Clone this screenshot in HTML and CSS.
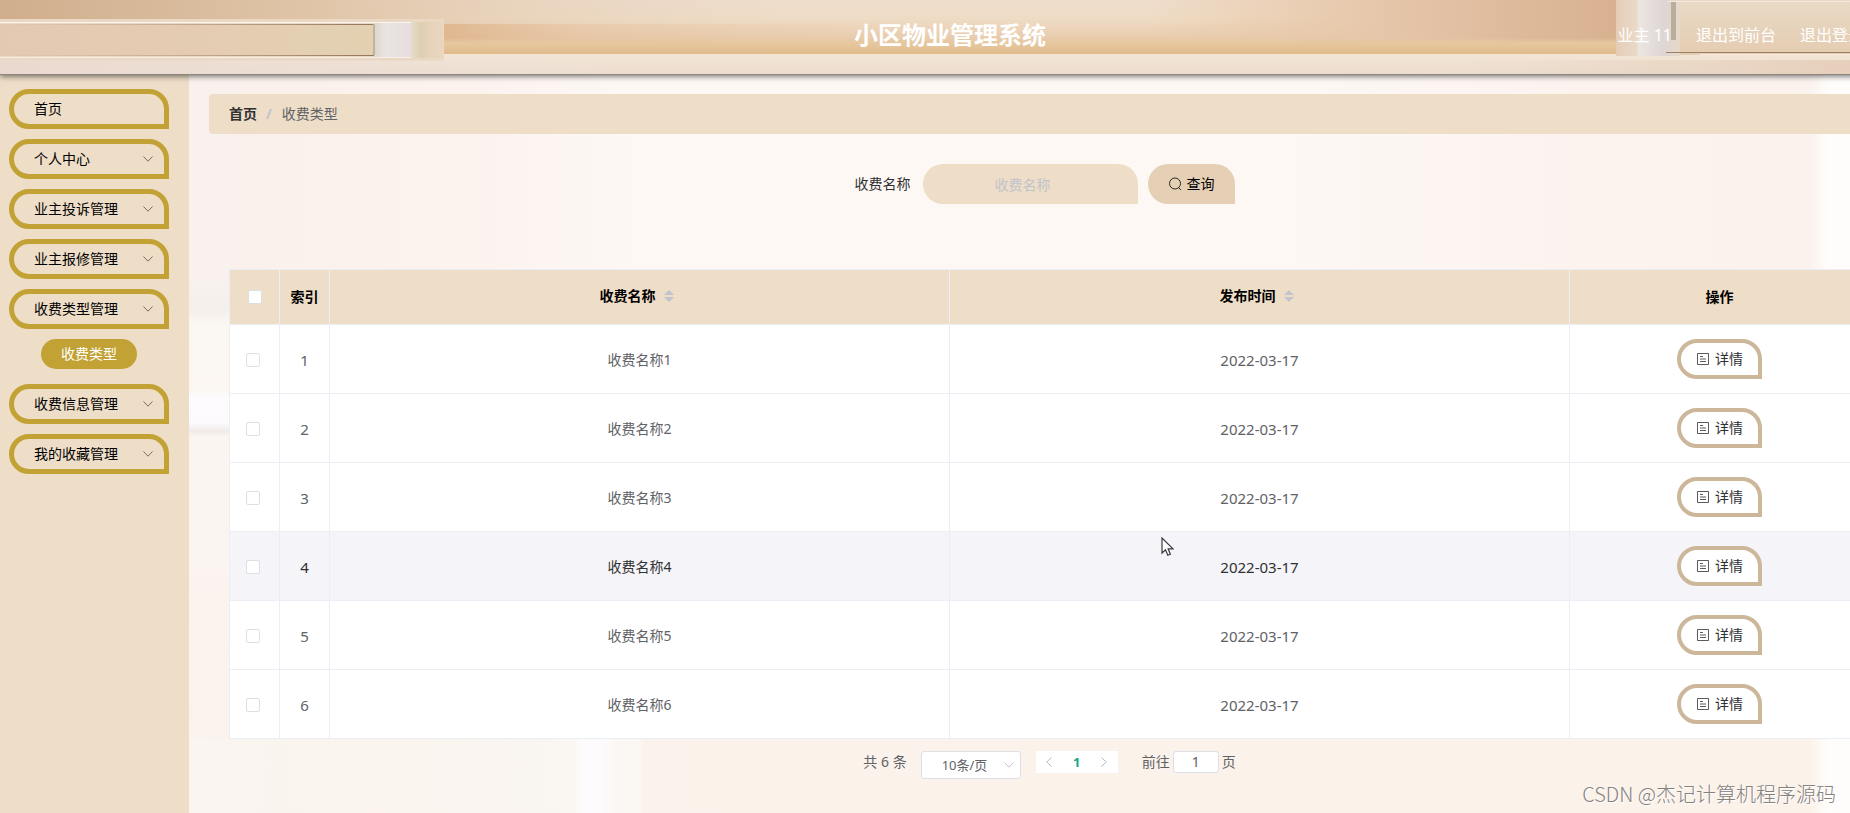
FILE: index.html
```html
<!DOCTYPE html>
<html lang="zh-CN">
<head>
<meta charset="utf-8">
<title>小区物业管理系统</title>
<link rel="stylesheet" href="styles.css">
</head>
<body>
<svg class="defs" aria-hidden="true">
  <symbol id="chevron" viewBox="0 0 12 12"><path d="M1.5 3.5 6 8.2l4.500-4.700" fill="none" stroke="currentColor"/></symbol>
  <symbol id="doc" viewBox="0 0 14 14"><path d="M1.500 1.500h11v11h-11zM4 4.500h3M4 7h6M4 9.500h6" fill="none" stroke="currentColor" stroke-width=".8"/></symbol>
  <symbol id="sort" viewBox="0 0 10 12"><path d="M5 0l5 5H0zM5 12l5-5H0z" fill="currentColor"/></symbol>
</svg>
<div class="page">
  <header class="header">
    <svg class="header-art" viewBox="0 0 1900 74" preserveAspectRatio="none" aria-hidden="true">
      <defs>
        <linearGradient id="wall" x1="0" y1="0" x2="0" y2="1">
          <stop offset="0" stop-color="#eedccc"/><stop offset=".35" stop-color="#efdcc5"/><stop offset=".7" stop-color="#e9ccae"/><stop offset=".85" stop-color="#e5c59e"/><stop offset="1" stop-color="#e1bc8e"/>
        </linearGradient>
        <linearGradient id="topl"><stop offset="0" stop-color="#cfae8c"/><stop offset=".4" stop-color="#e0c5a8"/><stop offset="1" stop-color="#e9d6c2" stop-opacity="0"/></linearGradient>
        <linearGradient id="topr"><stop offset="0" stop-color="#e8c9a6" stop-opacity="0"/><stop offset=".5" stop-color="#e6c6aa"/><stop offset="1" stop-color="#d8b190"/></linearGradient>
        <linearGradient id="mid"><stop offset="0" stop-color="#deb48c" stop-opacity=".9"/><stop offset=".3" stop-color="#e4c09d" stop-opacity=".5"/><stop offset="1" stop-color="#e8caab" stop-opacity="0"/></linearGradient>
        <linearGradient id="base" x1="0" y1="0" x2="0" y2="1"><stop offset="0" stop-color="#e6c8a0" stop-opacity="0"/><stop offset=".3" stop-color="#e6c8a0"/><stop offset="1" stop-color="#e0bb8b"/></linearGradient>
        <linearGradient id="ledge" x1="0" y1="0" x2="0" y2="1"><stop offset="0" stop-color="#f3e5d6"/><stop offset="1" stop-color="#ecddcf"/></linearGradient>
        <linearGradient id="ledgel"><stop offset="0" stop-color="#ead9cf"/><stop offset="1" stop-color="#ede3d9" stop-opacity="0"/></linearGradient>
        <linearGradient id="ledger"><stop offset="0" stop-color="#e7d3be" stop-opacity="0"/><stop offset="1" stop-color="#e5cdb8"/></linearGradient>
        <linearGradient id="barl"><stop offset="0" stop-color="#e3c9b2"/><stop offset=".5" stop-color="#e4ccb2"/><stop offset="1" stop-color="#e3d1b2"/></linearGradient>
        <linearGradient id="line"><stop offset="0" stop-color="#b39177" stop-opacity="0"/><stop offset="1" stop-color="#94755f"/></linearGradient>
        <linearGradient id="glass"><stop offset="0" stop-color="#dcd8cf"/><stop offset=".3" stop-color="#e9e4e1"/><stop offset="1" stop-color="#e8dde1"/></linearGradient>
        <linearGradient id="endcap"><stop offset="0" stop-color="#e6dccb"/><stop offset=".3" stop-color="#ddd0b1"/><stop offset=".6" stop-color="#e6d3bb"/><stop offset="1" stop-color="#ead6bf"/></linearGradient>
        <linearGradient id="barr" x1="0" y1="0" x2="0" y2="1"><stop offset="0" stop-color="#e8dac7"/><stop offset="1" stop-color="#e5ccb1"/></linearGradient>
        <linearGradient id="panel"><stop offset="0" stop-color="#e5cdb7"/><stop offset=".32" stop-color="#ead9c6"/><stop offset=".36" stop-color="#ebe6e2"/><stop offset=".75" stop-color="#ded5d5"/><stop offset="1" stop-color="#e8d8c8"/></linearGradient>
      </defs>
      <rect width="1900" height="54" fill="url(#wall)"/>
      <rect width="780" height="24" fill="url(#topl)"/>
      <rect x="443" y="24" width="460" height="22" fill="url(#mid)"/>
      <rect x="1150" width="466" height="54" fill="url(#topr)"/>
      <rect x="443" y="38" width="1173" height="16" fill="url(#base)"/>
      <rect y="54" width="1900" height="20" fill="url(#ledge)"/>
      <rect y="19" width="444" height="42" fill="#ead8c5"/>
      <rect y="60" width="640" height="14" fill="url(#ledgel)"/>
      <rect y="24" width="376" height="32" fill="url(#barl)"/>
      <rect y="22" width="411" height="1" fill="#fbf5ee"/>
      <rect y="24" width="374" height="1" fill="url(#line)"/>
      <rect y="55" width="374" height="1" fill="url(#line)"/>
      <rect y="57" width="411" height="1" fill="#f8eee6"/>
      <rect x="373" y="24" width="2" height="31" fill="#c3b29c"/>
      <rect x="375" y="23" width="36" height="34" fill="url(#glass)"/>
      <rect x="411" y="22" width="32" height="36" fill="url(#endcap)"/>
      <rect x="1616" width="284" height="55" fill="url(#barr)"/>
      <rect x="1616" width="64" height="56" fill="url(#panel)"/>
      <rect x="1671" y="2" width="5" height="38" fill="#b9ad9b"/>
      <rect x="1668" y="1" width="232" height="1" fill="#f2e8db"/>
      <rect x="1666" y="52" width="234" height="1" fill="#9b8065"/>
      <rect x="1700" y="54" width="200" height="1" fill="#f8eadc"/>
      <rect x="1450" y="60" width="450" height="14" fill="url(#ledger)"/>
    </svg>
    <h1 class="title">小区物业管理系统</h1>
    <nav class="user-nav"><span>业主 11</span><a href="#front">退出到前台</a><a href="#logout">退出登录</a></nav>
  </header>
  <div class="body">
    <aside class="sidebar">
      <button class="menu" type="button">首页</button>
      <button class="menu" type="button">个人中心<svg class="icon"><use href="#chevron"/></svg></button>
      <button class="menu" type="button">业主投诉管理<svg class="icon"><use href="#chevron"/></svg></button>
      <button class="menu" type="button">业主报修管理<svg class="icon"><use href="#chevron"/></svg></button>
      <button class="menu" type="button">收费类型管理<svg class="icon"><use href="#chevron"/></svg></button>
      <a class="submenu" href="#types">收费类型</a>
      <button class="menu" type="button">收费信息管理<svg class="icon"><use href="#chevron"/></svg></button>
      <button class="menu" type="button">我的收藏管理<svg class="icon"><use href="#chevron"/></svg></button>
    </aside>
    <main class="main">
      <nav class="crumbs"><a href="#home">首页</a><span class="slash">/</span><span>收费类型</span></nav>
      <form class="search">
        <label for="name">收费名称</label>
        <input id="name" class="search-input" type="text" placeholder="收费名称">
        <button class="search-btn" type="button"><svg class="icon" viewBox="0 0 14 14"><circle cx="7" cy="6.500" r="5.500" fill="none" stroke="currentColor" stroke-width=".8"/><path d="M10.500 10.500 13 13" stroke="currentColor" stroke-width=".8"/></svg>查询</button>
      </form>
      <table class="table">
        <colgroup><col class="c-narrow"><col class="c-narrow"><col><col><col class="c-op"></colgroup>
        <thead><tr>
          <th><input type="checkbox" aria-label="全选"></th><th>索引</th>
          <th><span class="sortable">收费名称<svg><use href="#sort"/></svg></span></th>
          <th><span class="sortable">发布时间<svg><use href="#sort"/></svg></span></th><th>操作</th>
        </tr></thead>
        <tbody>
          <tr><td><input type="checkbox" aria-label="选择 1"></td><td class="num">1</td><td>收费名称1</td><td class="num">2022-03-17</td><td><button class="detail" type="button"><svg class="icon"><use href="#doc"/></svg>详情</button></td></tr>
          <tr><td><input type="checkbox" aria-label="选择 2"></td><td class="num">2</td><td>收费名称2</td><td class="num">2022-03-17</td><td><button class="detail" type="button"><svg class="icon"><use href="#doc"/></svg>详情</button></td></tr>
          <tr><td><input type="checkbox" aria-label="选择 3"></td><td class="num">3</td><td>收费名称3</td><td class="num">2022-03-17</td><td><button class="detail" type="button"><svg class="icon"><use href="#doc"/></svg>详情</button></td></tr>
          <tr class="hover"><td><input type="checkbox" aria-label="选择 4"></td><td class="num">4</td><td>收费名称4</td><td class="num">2022-03-17</td><td><button class="detail" type="button"><svg class="icon"><use href="#doc"/></svg>详情</button></td></tr>
          <tr><td><input type="checkbox" aria-label="选择 5"></td><td class="num">5</td><td>收费名称5</td><td class="num">2022-03-17</td><td><button class="detail" type="button"><svg class="icon"><use href="#doc"/></svg>详情</button></td></tr>
          <tr><td><input type="checkbox" aria-label="选择 6"></td><td class="num">6</td><td>收费名称6</td><td class="num">2022-03-17</td><td><button class="detail" type="button"><svg class="icon"><use href="#doc"/></svg>详情</button></td></tr>
        </tbody>
      </table>
      <div class="pagination">
        <span class="total">共 6 条</span>
        <span class="size"><select aria-label="每页条数"><option>10条/页</option></select><svg class="icon"><use href="#chevron"/></svg></span>
        <span class="pager">
          <button type="button" aria-label="上一页"><svg class="icon prev"><use href="#chevron"/></svg></button>
          <button type="button" class="current">1</button>
          <button type="button" aria-label="下一页"><svg class="icon next"><use href="#chevron"/></svg></button>
        </span>
        <label class="jump">前往<input type="text" value="1">页</label>
      </div>
    </main>
  </div>
</div>
<svg class="cursor" viewBox="0 0 13 20" aria-hidden="true"><path d="M1 1v15l3.500-3.300 2.300 5.600 2.600-1.100-2.300-5.400H12z" fill="#fff" stroke="#3b3b42" stroke-width="1.200"/></svg>
<div class="watermark">CSDN @杰记计算机程序源码</div>
</body>
</html>
```
FILE: styles.css
```css
* { box-sizing: border-box; }
html, body { height: 100%; }
body {
  margin: 0;
  overflow: hidden;
  position: relative;
  font: 14px/20px "Noto Sans", "Noto Sans CJK SC", sans-serif;
  color: #606266;
}
button, input, select { font: inherit; color: inherit; }
a { color: inherit; text-decoration: none; }
.defs { display: none; }
.icon { width: 12px; height: 12px; flex: none; }

/* The layout is wider than the window and runs off its right edge */
.page {
  display: flex;
  flex-direction: column;
  min-height: 100%;
  margin-right: -50px;
}
.header {
  position: relative;
  z-index: 1;
  display: grid;
  align-items: center;
  height: 75px;
  padding-bottom: 5px;
  border-bottom: 1px solid #8e8680;
  box-shadow: 0 1px 6px rgba(0, 0, 0, .6);
  color: #fff;
}
.header-art { position: absolute; inset: 0; width: 100%; height: 100%; }
.title, .user-nav { position: relative; grid-area: 1 / 1; }
.title { margin: 0; text-align: center; font-size: 24px; line-height: 32px; font-weight: 700; }
.user-nav { justify-self: end; display: flex; gap: 24px; padding-right: 36px; font-size: 16px; line-height: 24px; }

.body { flex: 1; display: flex; }
.sidebar {
  flex: none;
  width: 189px;
  padding: 14px 20px 0 9px;
  display: flex;
  flex-direction: column;
  gap: 10px;
  background: #eeddc7;
}
.menu {
  display: flex;
  justify-content: space-between;
  align-items: center;
  height: 40px;
  padding: 0 10px 0 20px;
  border: 5px solid #c2a234;
  border-radius: 20px 20px 0 20px;
  background: none;
  color: #000;
}
.menu .icon { color: #77705f; }
.submenu {
  align-self: center;
  height: 30px;
  margin-bottom: 5px;
  padding: 0 20px;
  border-radius: 15px;
  background: #c2a234;
  color: #fff;
  line-height: 30px;
}

.main {
  flex: 1;
  min-width: 0;
  padding: 19px 10px 0 20px;
  background:
    linear-gradient(90deg, transparent 1620px, #fffdfb 1640px),
    linear-gradient(90deg, transparent 385px, #fdfbfa 390px, #fdfbfe 410px, #fbf8f4 425px, #fbf8f4 450px, transparent 455px) 0 663px no-repeat,
    linear-gradient(90deg, #faf5f0, #fbf4ef 180px, #faf6f1 385px, #fbf2eb 455px, #fbf2ea) 0 663px no-repeat,
    linear-gradient(#f8f1ed 0, #f8f1ee 200px, #f5efeb 235px, #fbf7f3 250px, #fcf7f3 315px, #fdfbfe 325px, #fcfafc 348px, #f0ebe8 356px, #fbf5f1 362px, #fbf5f1 480px, #fcf2ee 530px, #fbf3ee) 0 180px / 42px 100% no-repeat,
    linear-gradient(90deg, #f9f0ec, #fcf2ee 260px, #fdf8f4 440px, #fdf8f4 1100px, #fcf2ee 1450px, #faf2ed);
  background-position: 0 0, 0 663px, 0 663px, 0 0, 0 0;
}
.crumbs {
  display: flex;
  align-items: center;
  height: 40px;
  padding: 0 20px;
  border-radius: 4px;
  background: #eeddc7;
}
.crumbs a { color: #303133; font-weight: 700; }
.slash { margin: 0 10px 0 9px; color: #c0c4cc; font-weight: 700; }

.search { display: flex; justify-content: center; align-items: center; gap: 10px; margin-top: 30px; padding-right: 10px; color: #303133; }
.search label { margin-right: 2px; }
.search-input {
  width: 215px;
  height: 40px;
  padding: 0 30px 0 15px;
  border: 0;
  border-radius: 20px 20px 0 20px;
  background: #eeddc7;
  text-align: center;
}
.search-input::placeholder { color: #c0c4cc; }
.search-btn {
  display: flex;
  align-items: center;
  gap: 5px;
  height: 40px;
  padding: 0 20px;
  border: 0;
  border-radius: 20px 20px 0 20px;
  background: #e6d0b5;
  color: #000;
}
.search-btn .icon { width: 14px; height: 14px; }

.table {
  width: calc(100% - 40px);
  margin: 65px 20px 0;
  table-layout: fixed;
  border-collapse: separate;
  border-spacing: 0;
  border: solid #ebeef5;
  border-width: 1px 0 0 1px;
  background: #fff;
  text-align: center;
}
.c-narrow { width: 50px; }
.c-op { width: 300px; }
.table th, .table td { padding: 0; border: solid #ebeef5; border-width: 0 1px 1px 0; }
.table th { height: 55px; background: #eeddc7; color: #000; }
.table td { height: 69px; padding-top: 1px; }
.table .num { font-size: 15px; }
.table td:first-child { padding-right: 4px; }
.table td:last-child { padding-top: 0; }
.hover td { background: #f5f4f8; color: #303133; }
.table input {
  appearance: none;
  display: block;
  width: 14px;
  height: 14px;
  margin: 0 auto;
  border: 1px solid #dcdfe6;
  border-radius: 2px;
  background: #fff;
}
.sortable { display: flex; justify-content: center; align-items: center; gap: 8px; padding: 0 6px 3px 0; }
.sortable svg { width: 10px; height: 12px; color: #c0c4cc; }
.detail {
  display: inline-flex;
  align-items: center;
  gap: 5px;
  height: 40px;
  padding: 0 15px;
  border: 4px solid #cdb79b;
  border-radius: 20px 20px 0 20px;
  background: #fff;
  color: #303133;
  vertical-align: middle;
}
.detail .icon { width: 14px; height: 14px; }

.pagination { display: flex; justify-content: center; align-items: flex-start; margin-top: 12px; font-size: 13px; line-height: 22px; }
.total, .jump { font-size: 14px; }
.size { position: relative; margin: 0 15px 0 14px; }
.size select {
  appearance: none;
  display: block;
  width: 100px;
  height: 28px;
  padding: 0 20px;
  border: 1px solid #dcdfe6;
  border-radius: 3px;
  background: #fff;
}
.size .icon { position: absolute; right: 6px; top: 8px; color: #c0c4cc; }
.pager { display: flex; width: 82px; height: 22px; background: #fff; color: #b4b8c0; }
.pager button { flex: 1; display: flex; justify-content: center; align-items: center; padding: 0; border: 0; background: none; }
.pager .current { color: #18a685; font-weight: 700; }
.prev { transform: rotate(90deg); }
.next { transform: rotate(-90deg); }
.jump { display: flex; gap: 3px; margin-left: 24px; }
.jump input { width: 46px; height: 22px; padding: 0; border: 1px solid #dcdfe6; border-radius: 3px; background: #fff; text-align: center; }

.cursor { position: absolute; left: 1161px; top: 537px; width: 13px; height: 20px; }
.watermark {
  position: absolute;
  right: 14px;
  bottom: 5px;
  font: 20px/28px "Noto Sans CJK SC", sans-serif;
  font-weight: 300;
  color: #85817e;
  text-shadow: 1px 1px 0 #fff;
}
```
